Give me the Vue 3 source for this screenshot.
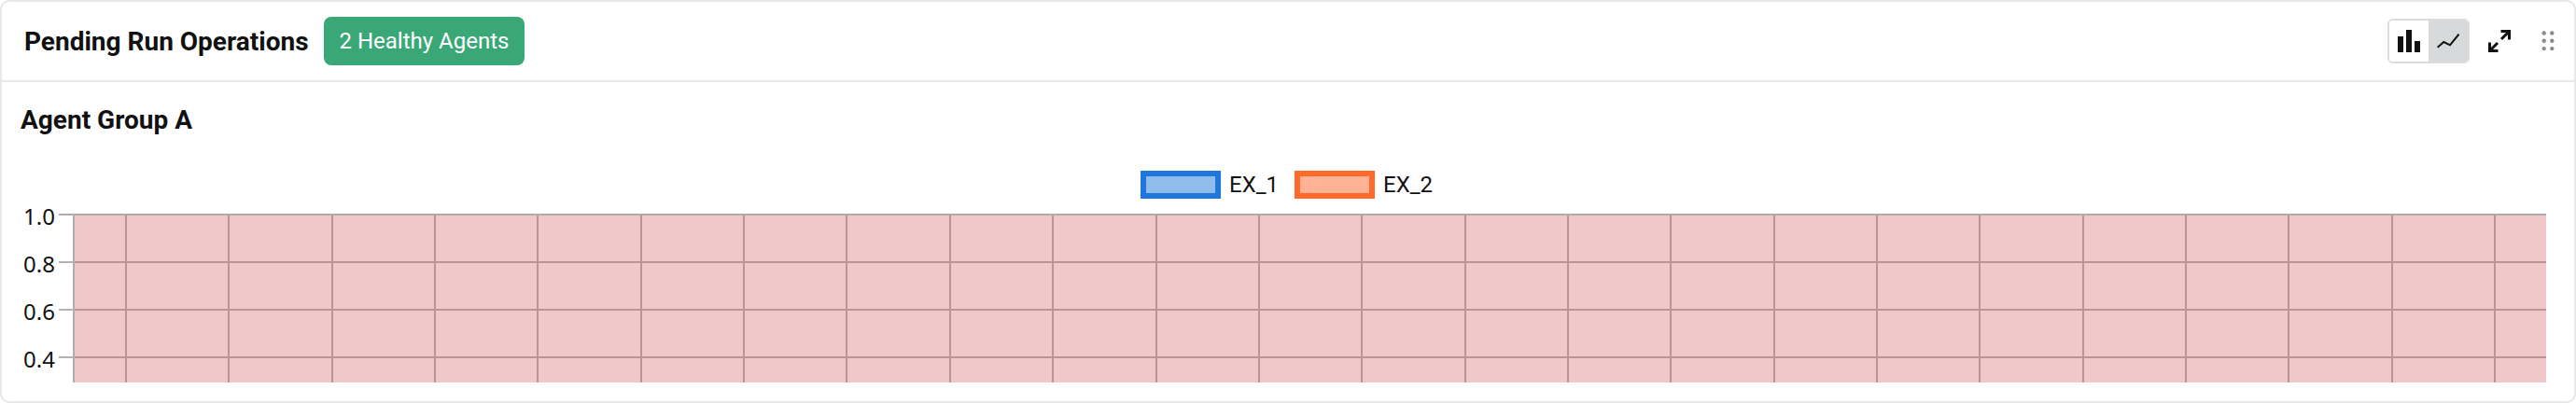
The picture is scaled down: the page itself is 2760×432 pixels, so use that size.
<template>
  <section class="card">
    <header class="head">
      <div class="head-left">
        <h2 class="title">Pending Run Operations</h2>
        <span class="badge">2 Healthy Agents</span>
      </div>
      <div class="head-right">
        <div class="toggle">
          <button class="tog on">
            <svg width="24" height="24" viewBox="0 0 24 24"><path d="M0 7h6v17H0zM9 0h6v24H9zM18 12h6v12h-6z" fill="#111" /></svg>
          </button>
          <button class="tog off">
            <svg width="24" height="18" viewBox="0 0 24 18"><path d="M.7 15.7L7.3 10l6.7 3.3 9.5-11.6" fill="none" stroke="#111" stroke-width="2" /></svg>
          </button>
        </div>
        <svg class="expand" width="24" height="24" viewBox="0 0 24 24">
          <path d="M14 10l8-8M13.5 1.5h9v9M10 14l-8 8M10.5 22.5h-9v-9" fill="none" stroke="#111" stroke-width="3" />
        </svg>
        <svg class="drag" width="14" height="24" viewBox="0 0 14 24">
          <circle v-for="d in dots" :key="d.k" :cx="d.x" :cy="d.y" r="2.2" fill="#8a8a8a" />
        </svg>
      </div>
    </header>
    <div class="body">
      <h3 class="group">Agent Group A</h3>
      <div class="legend">
        <span class="swatch blue"></span><span class="name">EX_1</span>
        <span class="swatch orange"></span><span class="name">EX_2</span>
      </div>
      <svg class="chart" width="2726" height="193" viewBox="2 0 2726 193">
        <rect x="79" y="13" width="2649" height="180" fill="#f0c8ca" />
        <line v-for="y in [64, 115, 166]" :key="y" x1="79" x2="2728" :y1="y" :y2="y" stroke="#bd9496" stroke-width="2" />
        <line v-for="x in vlines" :key="x" :x1="x" :x2="x" y1="13" y2="193" stroke="#bd9496" stroke-width="2" />
        <line x1="63" x2="2728" y1="13" y2="13" stroke="#b3abab" stroke-width="2" />
        <line x1="79" x2="79" y1="13" y2="193" stroke="#b3abab" stroke-width="2" />
        <line v-for="y in [64, 115, 166]" :key="'t' + y" x1="63" x2="79" :y1="y" :y2="y" stroke="#b3b3b3" stroke-width="2" />
        <text v-for="t in ticks" :key="t.label" x="59" :y="t.y" text-anchor="end" class="tick">{{ t.label }}</text>
      </svg>
    </div>
  </section>
</template>

<script setup>
const dots = []
for (let r = 0; r < 3; r++) {
  for (let c = 0; c < 2; c++) {
    dots.push({ k: r + '-' + c, x: 2.7 + c * 8.6, y: 3.5 + r * 8.3 })
  }
}

const vlines = []
for (let i = 0; i < 24; i++) {
  vlines.push(Math.round(135 + i * 110.35))
}

const ticks = [
  { label: '1.0', y: 24 },
  { label: '0.8', y: 75 },
  { label: '0.6', y: 126 },
  { label: '0.4', y: 177 }
]
</script>

<style>
html, body {
  margin: 0;
  background: #fff;
}
</style>

<style scoped>
.card {
  box-sizing: border-box;
  width: 2760px;
  height: 432px;
  border: 2px solid #e8e8e8;
  border-radius: 10px;
  background: #fff;
  overflow: hidden;
  font-family: Roboto, "Liberation Sans", sans-serif;
  color: #111;
}

.head {
  box-sizing: border-box;
  height: 86px;
  padding: 0 21px 0 24px;
  border-bottom: 2px solid #e8e8e8;
  display: flex;
  align-items: center;
  justify-content: space-between;
}

.head-left {
  display: flex;
  align-items: center;
  gap: 16px;
}

.title {
  margin: 0;
  font-size: 28px;
  font-weight: 700;
}

.badge {
  background: #3aa876;
  color: #fff;
  font-size: 24px;
  line-height: 52px;
  padding: 0 17px;
  border-radius: 8px;
}

.head-right {
  display: flex;
  align-items: center;
}

.toggle {
  display: flex;
  box-sizing: border-box;
  width: 88px;
  height: 48px;
  border: 2px solid #dcdcdd;
  border-radius: 6px;
  overflow: hidden;
  margin-right: 20px;
}

.tog {
  flex: 1;
  border: 0;
  padding: 0;
  display: flex;
  align-items: center;
  justify-content: center;
}

.on {
  background: #fff;
}

.off {
  background: #d8d9da;
}

.drag {
  margin-left: 33px;
}

.group {
  margin: 0;
  padding: 24px 0 0 20px;
  font-size: 28px;
  line-height: 34px;
  font-weight: 700;
}

.legend {
  display: flex;
  align-items: center;
  justify-content: center;
  margin-top: 37px;
  padding-left: 14px;
  height: 30px;
  font-size: 24px;
}

.swatch {
  box-sizing: border-box;
  width: 86px;
  height: 30px;
  border: 6px solid;
  margin-right: 9px;
}

.blue {
  border-color: #1f77de;
  background: #90bcec;
}

.orange {
  border-color: #ff6a2b;
  background: #ffb294;
}

.name {
  margin-right: 17px;
}

.chart {
  display: block;
  margin-top: 4px;
}

.tick {
  font-family: "Noto Sans", sans-serif;
  font-size: 24px;
  fill: #111;
}
</style>
